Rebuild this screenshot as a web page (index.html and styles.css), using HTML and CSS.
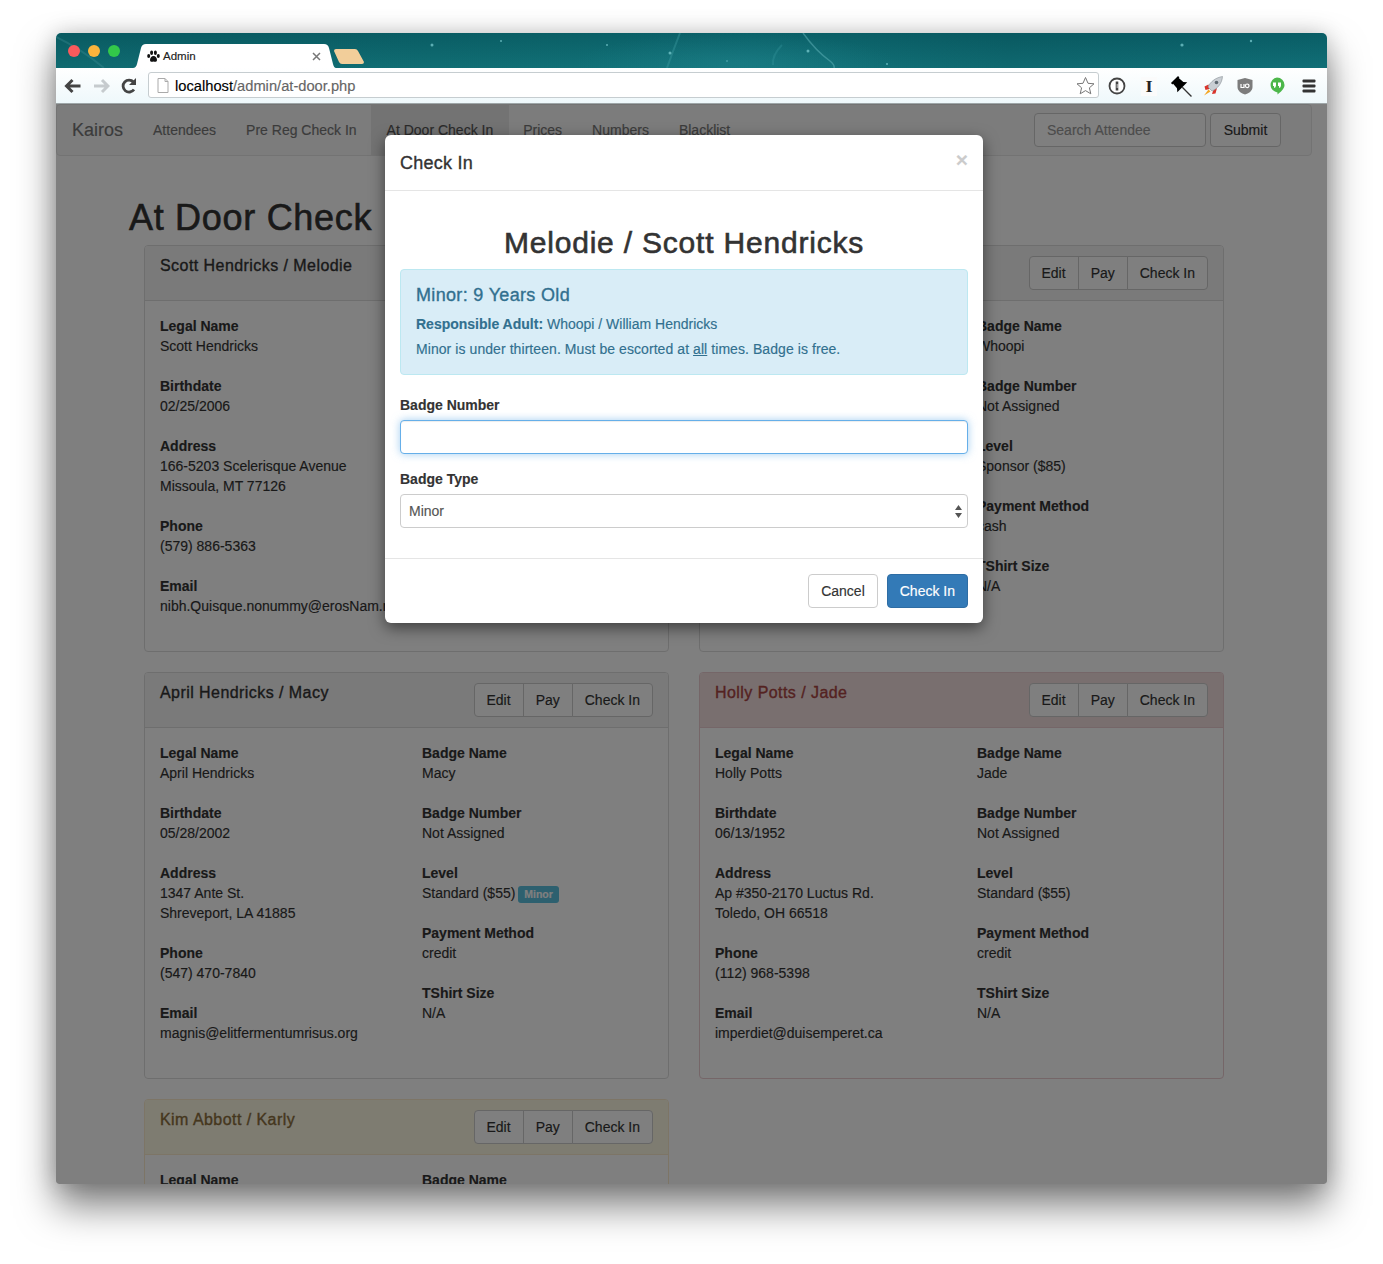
FILE: index.html
```html
<!DOCTYPE html>
<html lang="en">
<head>
<meta charset="utf-8">
<title>Admin</title>
<link rel="stylesheet" href="styles.css">
</head>
<body>
<div class="window">
  <div class="titlebar">
    <svg class="wallpaper" width="1271" height="35" viewBox="0 0 1271 35" fill="none">
      <path d="M0 4 Q25 16 48 35" stroke="#3f8f96" stroke-width="2" opacity=".35"/>
      <path d="M624 0 Q617 18 611 35" stroke="#3d9aa1" stroke-width="2" opacity=".4"/>
      <path d="M747 0 Q760 18 774 28 Q779 32 778 35" stroke="#62b4ba" stroke-width="1.500" opacity=".5"/>
      <path d="M726 12 Q716 22 717 32" stroke="#3d9aa1" stroke-width="2" opacity=".3"/>
      <g fill="#7fd0d4" opacity=".7">
        <circle cx="376" cy="12" r="1.500"/><circle cx="445" cy="8" r="1"/><circle cx="551" cy="12" r="1"/>
        <circle cx="614" cy="20" r="1.500"/><circle cx="752" cy="18" r="1.500"/><circle cx="671" cy="28" r=".8"/>
        <circle cx="831" cy="31" r="1"/><circle cx="1126" cy="12" r="1.600"/><circle cx="1195" cy="8" r="1.200"/>
      </g>
    </svg>
    <span class="light light-red"></span>
    <span class="light light-yellow"></span>
    <span class="light light-green"></span>
    <div class="tab">
      <svg class="tab-shape" width="203" height="24" viewBox="0 0 203 24"><path d="M0 24 Q3 24 4 20 L8 4 Q9 0 13 0 L191 0 Q195 0 196 4 L200 20 Q201 24 203 24 Z" fill="#fff"/></svg>
      <svg class="paw" width="13" height="13" viewBox="0 0 13 13" fill="#111"><ellipse cx="1.700" cy="6" rx="1.500" ry="2"/><ellipse cx="4.600" cy="2.700" rx="1.500" ry="2.200"/><ellipse cx="8.400" cy="2.700" rx="1.500" ry="2.200"/><ellipse cx="11.300" cy="6" rx="1.500" ry="2"/><path d="M6.500 6C4.500 6 3 8.200 3 10c0 1.800 1.600 2 3.500 1.600C8.400 12 10 11.800 10 10c0-1.800-1.500-4-3.500-4z"/></svg>
      <span class="tab-title">Admin</span>
      <svg class="tab-close" width="9" height="9" viewBox="0 0 9 9"><path d="M1 1L8 8M8 1L1 8" stroke="#777" stroke-width="1.500"/></svg>
    </div>
    <svg class="newtab" width="30" height="15" viewBox="0 0 30 15"><path d="M2 0H21Q23 0 24 2L30 13Q30 15 28 15H8Q6 15 5 13L0 2Q0 0 2 0Z" fill="#f2ce9a"/></svg>
  </div>

  <div class="toolbar">
    <svg class="navicon" width="18" height="16" viewBox="0 0 18 16"><path d="M8.500 2L2.500 8L8.500 14M3 8H16.500" fill="none" stroke="#444" stroke-width="3"/></svg>
    <svg class="navicon" width="18" height="16" viewBox="0 0 18 16"><path d="M10 2L16 8L10 14M15.500 8H2" fill="none" stroke="#c6cbce" stroke-width="3"/></svg>
    <svg class="navicon" width="18" height="18" viewBox="0 0 18 18"><path d="M14 12.500A6 6 0 1 1 13.500 5" fill="none" stroke="#444" stroke-width="2.800"/><path d="M16 1V8H9Z" fill="#444"/></svg>
    <div class="omnibox">
      <svg class="fileicon" width="12" height="15" viewBox="0 0 12 15"><path d="M1 .5H8L11 3.500V14.500H1Z" fill="#fff" stroke="#aaa"/><path d="M8 .5V3.500H11" fill="none" stroke="#aaa"/></svg>
      <span class="url"><span class="url-host">localhost</span>/admin/at-door.php</span>
      <svg class="star" width="19" height="19" viewBox="0 0 19 19"><path d="M9.500 1.500L12 7.300L18 7.800L13.400 11.800L14.800 17.800L9.500 14.600L4.200 17.800L5.600 11.800L1 7.800L7 7.300Z" fill="#fff" stroke="#777"/></svg>
    </div>
    <div class="extensions">
      <span class="ext"><svg width="18" height="18" viewBox="0 0 18 18"><circle cx="9" cy="9" r="7.500" fill="#fff" stroke="#444" stroke-width="1.800"/><path d="M9 4.500V13.500" stroke="#444" stroke-width="2.600"/><path d="M10.500 8H8.500M10.500 10H8.500" stroke="#fff"/></svg></span>
      <span class="ext"><span class="ext-i">I</span></span>
      <span class="ext"><svg width="22" height="22" viewBox="0 0 22 22"><g transform="translate(4.500 4.500) rotate(-45)"><path d="M-5 0H5V2H4L4.500 8L7 11H-7L-4.500 8L-4 2H-5Z" fill="#000"/><path d="M0 11V24" stroke="#333" stroke-width="1.300"/></g></svg></span>
      <span class="ext"><svg width="20" height="20" viewBox="0 0 20 20"><path d="M5.500 8.500L1.500 10.500L2.500 14L6.500 13ZM10.500 13.500L9 18L12.500 17.500L14 12Z" fill="#d9342b"/><path d="M5.500 13.500L1 19.500L7.500 15.500Z" fill="#f5a623"/><path d="M5 11C7.500 5.500 13 1.500 19.500 .5C19 7 15 12.500 9 15Z" fill="#c9ced3" stroke="#8a9097" stroke-width=".6"/><circle cx="13.500" cy="6.500" r="1.800" fill="#5d6870"/></svg></span>
      <span class="ext"><svg width="18" height="18" viewBox="0 0 18 18"><path d="M9 1L16.500 3V10C16.500 14 12.500 16.500 9 17.500C5.500 16.500 1.500 14 1.500 10V3Z" fill="#7c7c7c"/><path d="M5 7V10.500H8V7M13 8.800A1.800 1.800 0 1 1 9.400 8.800A1.800 1.800 0 1 1 13 8.800Z" fill="none" stroke="#fff" stroke-width="1.200"/></svg></span>
      <span class="ext"><svg width="16" height="18" viewBox="0 0 16 18"><path d="M8 0.500A7.500 7.500 0 0 1 15.500 8C15.500 12 11.500 15 8.500 17.500V15.400A7.500 7.500 0 0 1 8 0.500Z" fill="#4cb74a"/><path d="M4 5.500H7V8.500Q7 10.500 5 11V9H4ZM9 5.500H12V8.500Q12 10.500 10 11V9H9Z" fill="#fff"/></svg></span>
      <span class="ext"><svg width="14" height="14" viewBox="0 0 14 14" fill="#333"><rect x="0.500" y="0.500" width="13" height="3" rx="1"/><rect x="0.500" y="5.500" width="13" height="3" rx="1"/><rect x="0.500" y="10.500" width="13" height="3" rx="1"/></svg></span>
    </div>
  </div>

  <div class="viewport">
    <div class="page">
      <nav class="navbar">
        <a class="brand">Kairos</a>
        <a class="navlink">Attendees</a>
        <a class="navlink">Pre Reg Check In</a>
        <a class="navlink navlink-active">At Door Check In</a>
        <a class="navlink">Prices</a>
        <a class="navlink">Numbers</a>
        <a class="navlink">Blacklist</a>
        <form class="navform">
          <input class="search" type="text" placeholder="Search Attendee">
          <button class="btn" type="button">Submit</button>
        </form>
      </nav>
      <div class="container">
        <h1 class="heading">At Door Check In</h1>
        <div class="panels">

          <section class="panel">
            <header class="panel-head">
              <h3 class="panel-title">Scott Hendricks / Melodie</h3>
              <div class="btn-group"><button class="btn">Edit</button><button class="btn">Pay</button><button class="btn">Check In</button></div>
            </header>
            <div class="panel-body">
              <div>
                <dl class="field"><dt>Legal Name</dt><dd>Scott Hendricks</dd></dl>
                <dl class="field"><dt>Birthdate</dt><dd>02/25/2006</dd></dl>
                <dl class="field"><dt>Address</dt><dd>166-5203 Scelerisque Avenue<br>Missoula, MT 77126</dd></dl>
                <dl class="field"><dt>Phone</dt><dd>(579) 886-5363</dd></dl>
                <dl class="field"><dt>Email</dt><dd>nibh.Quisque.nonummy@erosNam.ro</dd></dl>
              </div>
              <div></div>
            </div>
          </section>

          <section class="panel">
            <header class="panel-head">
              <h3 class="panel-title"></h3>
              <div class="btn-group"><button class="btn">Edit</button><button class="btn">Pay</button><button class="btn">Check In</button></div>
            </header>
            <div class="panel-body">
              <div></div>
              <div>
                <dl class="field"><dt>Badge Name</dt><dd>Whoopi</dd></dl>
                <dl class="field"><dt>Badge Number</dt><dd>Not Assigned</dd></dl>
                <dl class="field"><dt>Level</dt><dd>Sponsor ($85)</dd></dl>
                <dl class="field"><dt>Payment Method</dt><dd>cash</dd></dl>
                <dl class="field"><dt>TShirt Size</dt><dd>N/A</dd></dl>
              </div>
            </div>
          </section>

          <section class="panel">
            <header class="panel-head">
              <h3 class="panel-title">April Hendricks / Macy</h3>
              <div class="btn-group"><button class="btn">Edit</button><button class="btn">Pay</button><button class="btn">Check In</button></div>
            </header>
            <div class="panel-body">
              <div>
                <dl class="field"><dt>Legal Name</dt><dd>April Hendricks</dd></dl>
                <dl class="field"><dt>Birthdate</dt><dd>05/28/2002</dd></dl>
                <dl class="field"><dt>Address</dt><dd>1347 Ante St.<br>Shreveport, LA 41885</dd></dl>
                <dl class="field"><dt>Phone</dt><dd>(547) 470-7840</dd></dl>
                <dl class="field"><dt>Email</dt><dd>magnis@elitfermentumrisus.org</dd></dl>
              </div>
              <div>
                <dl class="field"><dt>Badge Name</dt><dd>Macy</dd></dl>
                <dl class="field"><dt>Badge Number</dt><dd>Not Assigned</dd></dl>
                <dl class="field"><dt>Level</dt><dd>Standard ($55) <span class="label">Minor</span></dd></dl>
                <dl class="field"><dt>Payment Method</dt><dd>credit</dd></dl>
                <dl class="field"><dt>TShirt Size</dt><dd>N/A</dd></dl>
              </div>
            </div>
          </section>

          <section class="panel panel-danger">
            <header class="panel-head">
              <h3 class="panel-title">Holly Potts / Jade</h3>
              <div class="btn-group"><button class="btn">Edit</button><button class="btn">Pay</button><button class="btn">Check In</button></div>
            </header>
            <div class="panel-body">
              <div>
                <dl class="field"><dt>Legal Name</dt><dd>Holly Potts</dd></dl>
                <dl class="field"><dt>Birthdate</dt><dd>06/13/1952</dd></dl>
                <dl class="field"><dt>Address</dt><dd>Ap #350-2170 Luctus Rd.<br>Toledo, OH 66518</dd></dl>
                <dl class="field"><dt>Phone</dt><dd>(112) 968-5398</dd></dl>
                <dl class="field"><dt>Email</dt><dd>imperdiet@duisemperet.ca</dd></dl>
              </div>
              <div>
                <dl class="field"><dt>Badge Name</dt><dd>Jade</dd></dl>
                <dl class="field"><dt>Badge Number</dt><dd>Not Assigned</dd></dl>
                <dl class="field"><dt>Level</dt><dd>Standard ($55)</dd></dl>
                <dl class="field"><dt>Payment Method</dt><dd>credit</dd></dl>
                <dl class="field"><dt>TShirt Size</dt><dd>N/A</dd></dl>
              </div>
            </div>
          </section>

          <section class="panel panel-warning">
            <header class="panel-head">
              <h3 class="panel-title">Kim Abbott / Karly</h3>
              <div class="btn-group"><button class="btn">Edit</button><button class="btn">Pay</button><button class="btn">Check In</button></div>
            </header>
            <div class="panel-body">
              <div><dl class="field"><dt>Legal Name</dt></dl></div>
              <div><dl class="field"><dt>Badge Name</dt></dl></div>
            </div>
          </section>

        </div>
      </div>
    </div>

    <div class="backdrop"></div>

    <div class="modal">
      <div class="modal-head">
        <h4 class="modal-title">Check In</h4>
        <span class="close">×</span>
      </div>
      <div class="modal-body">
        <h2 class="modal-name">Melodie / Scott Hendricks</h2>
        <div class="alert">
          <h4 class="alert-title">Minor: 9 Years Old</h4>
          <p class="alert-line"><strong>Responsible Adult:</strong> Whoopi / William Hendricks</p>
          <p class="alert-line alert-line-wide">Minor is under thirteen. Must be escorted at <u>all</u> times. Badge is free.</p>
        </div>
        <div class="form-group">
          <label class="form-label">Badge Number</label>
          <input class="form-control form-control-focus" type="text">
        </div>
        <div class="form-group">
          <label class="form-label">Badge Type</label>
          <div class="select-wrap">
            <select class="form-control form-select"><option>Minor</option></select>
            <svg class="select-arrows" width="7" height="13" viewBox="0 0 7 13" fill="#555"><path d="M3.500 0L7 5H0ZM3.500 13L0 8H7Z"/></svg>
          </div>
        </div>
      </div>
      <div class="modal-foot">
        <button class="btn">Cancel</button>
        <button class="btn btn-primary">Check In</button>
      </div>
    </div>
  </div>
</div>
</body>
</html>
```

FILE: styles.css
```css
* { box-sizing: border-box; }
html, body { margin: 0; height: 100%; }
body {
  height: 1264px;
  overflow: hidden;
  background: #fff;
  color: #333;
  font: 14px/20px "Liberation Sans", Arial, sans-serif;
  -webkit-text-stroke: .15px;
  padding: 33px 56px 0;
}

/* browser chrome */
.window {
  width: 1271px;
  height: 1151px;
  display: flex;
  flex-direction: column;
  border-radius: 5px 5px 3px 3px;
  box-shadow: 0 22px 38px rgba(0, 0, 0, .5), 0 0 22px rgba(0, 0, 0, .18);
}
.titlebar {
  position: relative;
  flex: 0 0 35px;
  display: flex;
  align-items: flex-start;
  border-radius: 5px 5px 0 0;
  overflow: hidden;
  background:
    radial-gradient(ellipse 160px 30px at 680px 30px, rgba(40, 140, 150, .3), transparent),
    linear-gradient(rgba(0, 40, 50, .22), rgba(255, 255, 255, .02)),
    linear-gradient(90deg, #0b686e 0%, #0c6b71 30%, #0e7178 55%, #0b666d 75%, #0c6c74 100%);
}
.wallpaper { position: absolute; left: 0; top: 0; }
.light {
  position: relative;
  flex: none;
  width: 12px;
  height: 12px;
  margin-top: 12px;
  margin-right: 8px;
  border-radius: 50%;
}
.light-red { margin-left: 12px; background: #f95a5c; }
.light-yellow { background: #fcb43c; }
.light-green { background: #33c84a; }
.tab {
  position: relative;
  flex: none;
  width: 203px;
  height: 24px;
  margin-top: 11px;
  margin-left: 5px;
  display: flex;
  align-items: center;
  font-size: 11.500px;
}
.tab-shape { position: absolute; left: 0; top: 0; }
.paw { position: relative; margin-left: 14px; }
.tab-title { position: relative; margin-left: 3px; color: #222; }
.tab-close { position: relative; margin-left: auto; margin-right: 15px; }
.newtab { position: relative; flex: none; margin-top: 16px; margin-left: -2px; }

.toolbar {
  flex: 0 0 36px;
  display: flex;
  align-items: center;
  padding: 1px 0 0 8px;
  border-bottom: 1px solid #9ea6a8;
  background: linear-gradient(#fff, #eef8fb);
}
.navicon { flex: none; margin-right: 10px; }
.omnibox {
  flex: none;
  align-self: flex-start;
  width: 951px;
  height: 26px;
  margin-top: 3px;
  display: flex;
  align-items: center;
  padding: 1px 3px 0 8px;
  background: #fff;
  border: 1px solid #c6cdd0;
  border-radius: 3px;
}
.fileicon { flex: none; }
.url { margin-left: 6px; font-size: 14.700px; color: #666; }
.url-host { color: #000; }
.star { margin-left: auto; }
.extensions { display: flex; align-items: center; margin-left: 2px; }
.ext {
  flex: 0 0 32px;
  height: 24px;
  display: flex;
  align-items: center;
  justify-content: center;
}
.ext-i { font: bold 17px/19px "Liberation Serif", serif; color: #222; background: #fbfbfb; padding: 0 5px; }

/* page */
.viewport {
  position: relative;
  flex: 1;
  overflow: hidden;
  background: #fff;
  border-radius: 0 0 3px 3px;
}
.page { padding-right: 15px; }
.navbar {
  height: 52px;
  display: flex;
  align-items: stretch;
  background: #f8f8f8;
  border: 1px solid #e7e7e7;
  border-radius: 4px;
}
.brand {
  font-size: 18px;
  line-height: 50px;
  color: #777;
  padding: 0 15px;
}
.navlink { line-height: 50px; padding: 0 15px; color: #777; }
.navlink-active { background: #e7e7e7; color: #555; padding: 0 16px; margin: 0 -1px; }
.navform { margin-left: auto; margin-right: 30px; display: flex; align-items: center; gap: 4px; }
.navform .btn { width: 71px; padding: 0; }
.search {
  width: 172px;
  height: 34px;
  padding: 6px 12px;
  font: inherit;
  border: 1px solid #ccc;
  border-radius: 4px;
  background: #fff;
}
.search::placeholder { color: #999; opacity: 1; }

.container { padding: 42px 0 0 73px; }
.heading {
  margin: 0 0 7px;
  font-size: 36px;
  line-height: 40px;
  font-weight: 500;
  letter-spacing: .7px;
  -webkit-text-stroke: .6px;
  white-space: nowrap;
}
.panels {
  margin-left: 15px;
  width: 1080px;
  display: grid;
  grid-template-columns: 525px 525px;
  column-gap: 30px;
  row-gap: 20px;
}
.panel {
  background: #fff;
  border: 1px solid #ddd;
  border-radius: 4px;
}
.panel-head {
  display: flex;
  justify-content: space-between;
  align-items: flex-start;
  height: 55px;
  padding: 10px 15px;
  background: #f5f5f5;
  border-bottom: 1px solid #ddd;
  border-radius: 3px 3px 0 0;
}
.panel-title {
  margin: 0;
  padding-top: 1px;
  font-size: 16px;
  line-height: 18px;
  font-weight: 500;
  letter-spacing: .44px;
  -webkit-text-stroke: .35px;
}
.panel-danger { border-color: #ebccd1; }
.panel-danger .panel-head { background: #f2dede; border-color: #ebccd1; color: #a94442; }
.panel-warning { border-color: #faebcc; }
.panel-warning .panel-head { background: #fcf8e3; border-color: #faebcc; color: #8a6d3b; }
.panel-body {
  display: grid;
  grid-template-columns: 262px 1fr;
  padding: 15px 15px 0;
  height: 350px;
}
.field { margin: 0 0 20px; }
.field dt { font-weight: 700; }
.field dd { margin: 0; }
.label {
  display: inline-block;
  margin-left: -1px;
  padding: 2px 6px 3px;
  font-size: 10.500px;
  line-height: 12px;
  font-weight: 700;
  color: #fff;
  background: #5bc0de;
  border-radius: 3px;
  vertical-align: 0;
}

.btn {
  height: 34px;
  padding: 0 12px;
  font: inherit;
  color: #333;
  background: #fff;
  border: 1px solid #ccc;
  border-radius: 4px;
}
.btn-primary { color: #fff; background: #337ab7; border-color: #2e6da4; }
.btn-group { display: flex; flex: none; }
.btn-group .btn { border-radius: 0; margin-left: -1px; }
.btn-group .btn:first-child { border-radius: 4px 0 0 4px; margin-left: 0; }
.btn-group .btn:last-child { border-radius: 0 4px 4px 0; }

.backdrop { position: absolute; inset: 0; background: rgba(0, 0, 0, .5); }

/* modal */
.modal {
  position: absolute;
  left: 329px;
  top: 31px;
  width: 598px;
  background: #fff;
  border-radius: 6px;
  box-shadow: 0 5px 15px rgba(0, 0, 0, .5);
}
.modal-head {
  display: flex;
  justify-content: space-between;
  height: 56px;
  padding: 16px 15px 13px;
  border-bottom: 1px solid #e5e5e5;
}
.modal-title {
  margin: 0;
  font-size: 18px;
  line-height: 25px;
  font-weight: 500;
  letter-spacing: .25px;
  -webkit-text-stroke: .35px;
}
.close {
  margin-top: -2px;
  font-size: 21px;
  line-height: 21px;
  font-weight: 700;
  color: #000;
  opacity: .2;
}
.modal-body { padding: 15px; }
.modal-name {
  margin: 20px 0 10px;
  font-size: 30px;
  line-height: 33px;
  font-weight: 500;
  letter-spacing: .8px;
  -webkit-text-stroke: .6px;
  text-align: center;
}
.alert {
  height: 106px;
  margin-bottom: 20px;
  padding: 15px;
  color: #31708f;
  background: #d9edf7;
  border: 1px solid #bce8f1;
  border-radius: 4px;
}
.alert-title {
  margin: 0 0 9px;
  font-size: 18px;
  line-height: 20px;
  font-weight: 500;
  letter-spacing: .33px;
  -webkit-text-stroke: .35px;
}
.alert-line { margin: 0 0 5px; }
.alert-line-wide { letter-spacing: .07px; }
.form-group { margin-bottom: 15px; }
.form-label { display: block; margin-bottom: 5px; font-weight: 700; }
.form-control {
  display: block;
  width: 100%;
  height: 34px;
  padding: 6px 8px;
  font: inherit;
  color: #555;
  background: #fff;
  border: 1px solid #ccc;
  border-radius: 4px;
}
.form-control-focus {
  border-color: #66afe9;
  box-shadow: inset 0 1px 1px rgba(0, 0, 0, .075), 0 0 8px rgba(102, 175, 233, .6);
}
.select-wrap { position: relative; }
.form-select { appearance: none; -webkit-appearance: none; }
.select-arrows { position: absolute; right: 6px; top: 11px; }
.modal-foot {
  display: flex;
  justify-content: flex-end;
  gap: 9px;
  padding: 15px;
  border-top: 1px solid #e5e5e5;
}
```
